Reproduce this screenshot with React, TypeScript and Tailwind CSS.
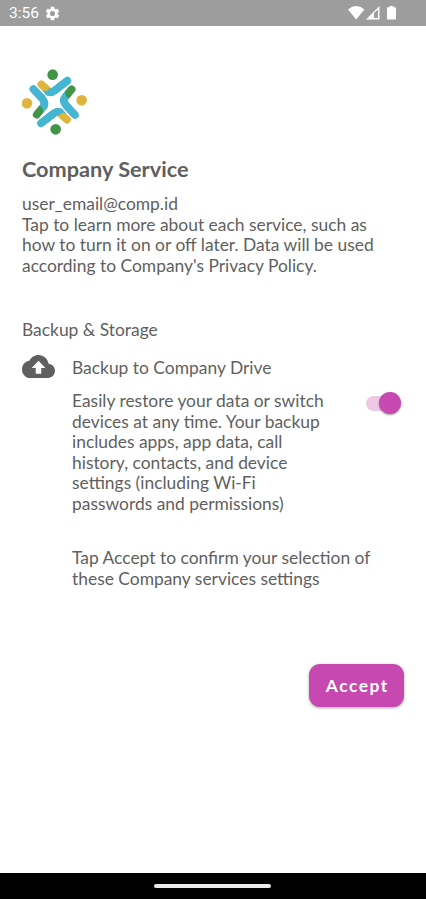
import React from "react";

function LogoArms() {
  return (
    <g strokeWidth="23">
      <path d="M82 73L102 91" stroke="#dfb541" />
      <path d="M160 62L121 92Q109 101 99 94" stroke="#44b6d3" strokeLinecap="butt" />
      <path d="M160 62L124 90" stroke="#44b6d3" />
      <path d="M83 91Q98 97 111 86L124 90L122 104Q108 113 95 103Z" fill="#44b6d3" />
      <path d="M68 164L84 145" stroke="#419547" />
      <path d="M58 87L85 116Q97 130 87 142" stroke="#44b6d3" strokeLinecap="butt" />
      <path d="M58 87L83 114" stroke="#44b6d3" />
      <path d="M78 137Q89 144 87 158L98 145Q107 130 96 116L84 120Z" fill="#44b6d3" />
    </g>
  );
}

function Logo() {
  return (
    <svg className="block h-[66px] w-[66px]" viewBox="24 27 198 198" fill="none" strokeLinecap="round" strokeLinejoin="round">
      <g fill="#419547">
        <circle cx="116" cy="44" r="16" />
        <circle cx="125" cy="208" r="16" />
      </g>
      <g fill="#dfb541">
        <circle cx="39" cy="130" r="16" />
        <circle cx="203" cy="121" r="16" />
      </g>
      <LogoArms />
      <g transform="rotate(180 120.5 126)">
        <LogoArms />
      </g>
    </svg>
  );
}

function Lines({ lines }: { lines: string[] }) {
  return (
    <>
      {lines.map((line) => (
        <span key={line} className="block whitespace-nowrap">{line}</span>
      ))}
    </>
  );
}

function StatusBar() {
  return (
    <header className="flex h-[26px] items-center bg-[#9d9d9d] pr-[29px] pl-[9px] text-white">
      <span className="w-[30px] pt-[2px] font-[Roboto,sans-serif] text-[15.5px] leading-none">3:56</span>
      <svg className="ml-[5px] h-[17px] w-[17px]" viewBox="0 0 24 24" fill="currentColor">
        <path d="M19.14 12.94c.04-.3.06-.61.06-.94s-.02-.64-.07-.94l2.03-1.58a.49.49 0 0 0 .12-.61l-1.92-3.32a.49.49 0 0 0-.59-.22l-2.39.96a7 7 0 0 0-1.62-.94l-.36-2.54a.48.48 0 0 0-.48-.41h-3.84a.48.48 0 0 0-.47.41l-.36 2.54c-.59.24-1.13.57-1.62.94l-2.39-.96a.48.48 0 0 0-.59.22L2.74 8.87a.48.48 0 0 0 .12.61l2.03 1.58a6 6 0 0 0 0 1.88l-2.03 1.58a.49.49 0 0 0-.12.61l1.92 3.32c.12.22.37.29.59.22l2.39-.96c.5.38 1.03.7 1.62.94l.36 2.54c.05.24.24.41.48.41h3.84c.24 0 .44-.17.47-.41l.36-2.54a7 7 0 0 0 1.62-.94l2.39.96c.22.08.47 0 .59-.22l1.92-3.32a.48.48 0 0 0-.12-.61zM12 15.6a3.6 3.6 0 1 1 0-7.2 3.6 3.6 0 0 1 0 7.2z" />
      </svg>
      <svg className="ml-auto h-[14px] w-[49px]" viewBox="0 0 49 14" fill="currentColor">
        <path d="M0 3.4Q8.200-3.200 16.400 3.400L8.200 13.500Z" />
        <path fillRule="evenodd" d="M18 13.500L31.500 0V13.500ZM26 7V12H30V3.500Z" />
        <path d="M41.500 0h4v1.300h1.500q1 0 1 1v10.200q0 1-1 1h-7q-1 0-1-1V2.300q0-1 1-1h1.500z" />
      </svg>
    </header>
  );
}

function Toggle() {
  return (
    <button role="switch" aria-checked="true" aria-label="Backup to Company Drive" className="flex h-[22px] w-[35px] items-center justify-end rounded-full">
      <span className="-mr-[11px] h-[15px] w-[24px] rounded-l-full bg-[#efc8e6]" />
      <span className="z-10 h-[22px] w-[22px] rounded-full bg-[#c748b0] shadow-[0_1px_2px_rgba(0,0,0,0.4)]" />
    </button>
  );
}

export default function App() {
  return (
    <div className="flex h-[899px] w-[426px] flex-col overflow-hidden bg-white font-[Lato,Carlito,sans-serif] text-[17.42px] leading-[20.5px] text-[#5f5f5f]">
      <StatusBar />
      <main className="flex flex-1 flex-col px-[22px] pt-[43px]">
        <Logo />
        <h1 className="mt-[20px] text-[21.7px] leading-[28px] font-bold">Company Service</h1>
        <div className="mt-[11px]">
          <Lines lines={["user_email@comp.id", "Tap to learn more about each service, such as", "how to turn it on or off later. Data will be used", "according to Company's Privacy Policy."]} />
        </div>
        <h2 className="mt-[44px]">Backup &amp; Storage</h2>
        <section className="mt-[17px] flex">
          <svg className="-mt-[3px] h-[23px] w-[33px] shrink-0" viewBox="0 4 24 16" preserveAspectRatio="none" fill="currentColor">
            <path d="M19.350 10.040C18.670 6.590 15.640 4 12 4 9.110 4 6.600 5.640 5.350 8.040 2.340 8.360 0 10.910 0 14c0 3.310 2.690 6 6 6h13c2.760 0 5-2.240 5-5 0-2.640-2.050-4.780-4.650-4.960zM14 13v4h-4v-4H7l5-5 5 5h-3z" />
          </svg>
          <div className="ml-[17px] flex-1">
            <h3>Backup to Company Drive</h3>
            <div className="mt-[13px] flex justify-between">
              <p className="w-[260px]">
                <Lines lines={["Easily restore your data or switch", "devices at any time. Your backup", "includes apps, app data, call", "history, contacts, and device", "settings (including Wi-Fi", "passwords and permissions)"]} />
              </p>
              <div className="mt-[1px] mr-[3.5px]"><Toggle /></div>
            </div>
            <p className="mt-[34px]">
              <Lines lines={["Tap Accept to confirm your selection of", "these Company services settings"]} />
            </p>
          </div>
        </section>
        <button className="mt-[75px] h-[43px] w-[95.5px] self-end rounded-[11px] bg-[#c748b0] pt-px pl-[2px] text-[17.4px] font-bold tracking-[1.5px] text-white shadow-[0_1px_3px_rgba(0,0,0,0.35)]">Accept</button>
      </main>
      <footer className="flex h-[26px] items-center justify-center bg-black pr-px">
        <div className="h-[4px] w-[117px] rounded-full bg-[#ebe9e9]" />
      </footer>
    </div>
  );
}
